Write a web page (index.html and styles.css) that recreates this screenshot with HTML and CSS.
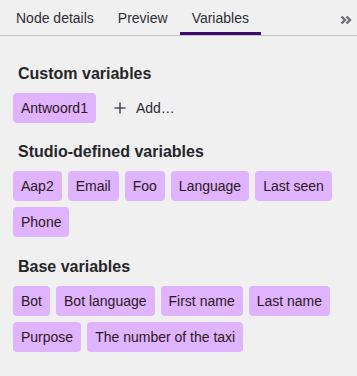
FILE: index.html
```html
<!DOCTYPE html>
<html lang="en">
<head>
    <meta charset="UTF-8">
    <meta name="viewport" content="width=device-width, initial-scale=1.0">
    <title>Variables</title>
    <link rel="stylesheet" href="styles.css">
</head>
<body>
    <div class="tab-bar">
        <div class="tabs">
            <div class="tab">Node details</div>
            <div class="tab">Preview</div>
            <div class="tab active">Variables</div>
        </div>
        <div class="overflow">
            <svg width="12" height="10" viewBox="0 0 12 10">
                <path d="M1.5 1.5 L5 5 L1.5 8.5 M6.5 1.5 L10 5 L6.5 8.5" fill="none" stroke="#6b6f7a" stroke-width="2.4"/>
            </svg>
        </div>
    </div>

    <div class="content">
        <h3>Custom variables</h3>
        <div class="chips">
            <span class="chip">Antwoord1</span>
            <span class="add">
                <svg width="12" height="12" viewBox="0 0 12 12">
                    <path d="M6 0.5 V11.5 M0.5 6 H11.5" stroke="#4b4f5a" stroke-width="1.6"/>
                </svg>
                Add…
            </span>
        </div>

        <h3>Studio-defined variables</h3>
        <div class="chips">
            <span class="chip">Aap2</span>
            <span class="chip">Email</span>
            <span class="chip">Foo</span>
            <span class="chip">Language</span>
            <span class="chip">Last seen</span>
            <span class="chip">Phone</span>
        </div>

        <h3 class="base">Base variables</h3>
        <div class="chips">
            <span class="chip">Bot</span>
            <span class="chip">Bot language</span>
            <span class="chip">First name</span>
            <span class="chip">Last name</span>
            <span class="chip">Purpose</span>
            <span class="chip">The number of the taxi</span>
        </div>
    </div>
</body>
</html>
```

FILE: styles.css
```css
body {
    margin: 0;
    font-family: "Liberation Sans", Arial, sans-serif;
    background-color: #f0f0f0;
    color: #2b2323;
}
.tab-bar {
    display: flex;
    justify-content: space-between;
    align-items: stretch;
    height: 35px;
    border-bottom: 1px solid #c4c4c4;
    padding-left: 4px;
}
.tabs {
    display: flex;
}
.tab {
    padding: 10px 12px 0;
    font-size: 14px;
    color: #2e2e36;
    border-bottom: 3px solid transparent;
    box-sizing: border-box;
}
.tab.active {
    border-bottom-color: #3a0a6b;
}
.overflow {
    padding: 11px 5px 0 0;
}
.content {
    padding: 0 13px;
}
h3 {
    margin: 0;
    padding: 29px 5px 10px;
    font-size: 16px;
    font-weight: bold;
    color: #262629;
}
.content h3:not(:first-child) {
    padding-top: 20px;
}
.content h3.base {
    padding-top: 21px;
}
.chips {
    display: flex;
    flex-wrap: wrap;
    align-items: center;
    gap: 6px;
}
.chip {
    display: inline-block;
    height: 30px;
    line-height: 30px;
    padding: 0 8px;
    font-size: 14px;
    background-color: #dfb3fd;
    border-radius: 4px;
    color: #2a1a1a;
}
.add {
    display: flex;
    align-items: center;
    gap: 10px;
    margin-left: 12px;
    font-size: 14px;
    color: #2b2b33;
}
```
